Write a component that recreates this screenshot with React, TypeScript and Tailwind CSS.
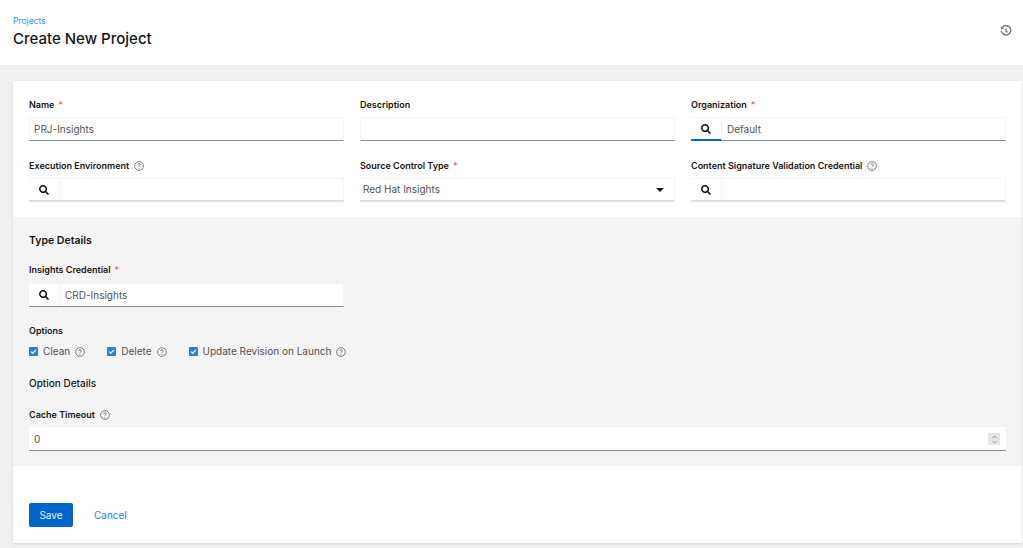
import { FaSearch } from "react-icons/fa";

const font = "font-['Inter','Liberation_Sans',sans-serif]";

const HelpIcon = ({ className = "" }: { className?: string }) => (
  <svg viewBox="0 0 16 16" className={`w-[10px] h-[10px] text-[#6a6e73] ${className}`} fill="none" stroke="currentColor">
    <circle cx="8" cy="8" r="7" strokeWidth="1.4" />
    <path d="M5.9 6.2c0-1.2 1-1.9 2.1-1.9s2.1.7 2.1 1.8c0 1.6-2.1 1.6-2.1 3.1" strokeWidth="1.4" />
    <circle cx="8" cy="11.6" r="0.9" fill="currentColor" stroke="none" />
  </svg>
);

const Label = ({ text, required, help }: { text: string; required?: boolean; help?: boolean }) => (
  <div className="flex items-center h-[13px] mb-[6px] text-[9px] font-semibold leading-none text-[#151515]">
    <span>{text}</span>
    {required && <span className="ml-[4px] font-normal text-[#e0483a]">*</span>}
    {help && <HelpIcon className="ml-[5px]" />}
  </div>
);

const Lookup = ({ value, focused, empty }: { value?: string; focused?: boolean; empty?: boolean }) => (
  <div className={`flex h-[24px] bg-white border-t border-r border-[#f5f5f5] ${empty ? "border-b-2 border-b-[#dedede]" : "border-b border-b-[#8a8d90]"}`}>
    <div className={`w-[31px] flex items-center justify-center border-r border-[#f0f0f0] ${focused ? "border-b-2 border-b-[#06c] -mb-px" : ""}`}>
      <FaSearch size={10} className="text-[#151515]" />
    </div>
    <div className="pl-[5px] pt-[1px] flex items-center text-[10px] text-[#4f5255]">{value}</div>
  </div>
);

const TextBox = ({ value }: { value?: string }) => (
  <div className="h-[24px] bg-white border border-[#f5f5f5] border-b-[#8a8d90] pl-[4px] pt-[1px] flex items-center text-[10px] text-[#4f5255]">
    {value}
  </div>
);

const Check = ({ text }: { text: string }) => (
  <div className="flex items-center">
    <span className="w-[9px] h-[9px] rounded-[1px] bg-[#2b7fdc] flex items-center justify-center">
      <svg viewBox="0 0 10 10" className="w-[7px] h-[7px]" fill="none" stroke="white" strokeWidth="1.8">
        <path d="M1.5 5.2l2.3 2.3 4.7-4.8" />
      </svg>
    </span>
    <span className="ml-[5px] text-[10px] text-[#4f5255]">{text}</span>
    <HelpIcon className="ml-[5px]" />
  </div>
);

export default function App() {
  return (
    <div className={`${font} w-[1023px] h-[548px] overflow-hidden bg-[#f0f0f0]`}>
      <header className="h-[65px] bg-white pl-[13px] pr-[11px] pt-[16px] flex justify-between">
        <div>
          <div className="text-[8.5px] leading-[11px] text-[#2b9af3]">Projects</div>
          <h1 className="mt-[2px] text-[15px] leading-[20px] font-medium text-[#151515]">Create New Project</h1>
        </div>
        <svg viewBox="0 0 16 16" className="w-[12px] h-[12px] mt-[9px] text-[#6a6e73]" fill="none" stroke="currentColor" strokeWidth="1.7">
          <path d="M3 3.2A6.3 6.3 0 1 1 1.8 8" />
          <path d="M1.2 1.8l.3 3.8 3.8-.3z" fill="currentColor" stroke="none" />
          <path d="M8 4.5v4l2.2 1.2" />
        </svg>
      </header>

      <main className="mt-[16px] ml-[13px] mr-[1px] h-[462px] bg-white shadow-[0_1px_2px_rgba(0,0,0,0.12)]">
        <div className="px-[16px] pt-[17px] grid grid-cols-3 gap-x-[16px] gap-y-[18px]">
          <div><Label text="Name" required /><TextBox value="PRJ-Insights" /></div>
          <div><Label text="Description" /><TextBox /></div>
          <div><Label text="Organization" required /><Lookup value="Default" focused /></div>
          <div><Label text="Execution Environment" help /><Lookup empty /></div>
          <div>
            <Label text="Source Control Type" required />
            <div className="h-[24px] bg-white border-t border-r border-[#f5f5f5] border-b-2 border-b-[#dedede] pl-[3px] pr-[10px] flex items-center justify-between text-[10px] text-[#4f5255]">
              <span>Red Hat Insights</span>
              <span className="w-0 h-0 border-x-[4px] border-x-transparent border-t-[4px] border-t-[#151515]" />
            </div>
          </div>
          <div><Label text="Content Signature Validation Credential" help /><Lookup empty /></div>
        </div>

        <section className="mt-[15px] h-[249px] bg-[#f4f4f4] px-[16px] pt-[17px]">
          <h2 className="text-[10.5px] leading-[14px] font-semibold text-[#151515]">Type Details</h2>
          <div className="mt-[15px] w-[315px]">
            <Label text="Insights Credential" required />
            <div className="pt-[1px]">
              <Lookup value="CRD-Insights" />
            </div>
          </div>
          <div className="mt-[17px] text-[9px] leading-[13px] font-semibold text-[#151515]">Options</div>
          <div className="mt-[7px] flex gap-x-[22px]">
            <Check text="Clean" />
            <Check text="Delete" />
            <Check text="Update Revision on Launch" />
          </div>
          <h3 className="mt-[17px] text-[10px] leading-[14px] font-medium text-[#151515]">Option Details</h3>
          <div className="mt-[18px]">
            <Label text="Cache Timeout" help />
            <div className="h-[24px] mt-[1px] bg-white border-b border-[#8a8d90] pl-[5px] pr-[6px] pt-[1px] flex items-center justify-between text-[10px] text-[#4f5255]">
              <span>0</span>
              <span className="w-[12px] h-[12px] bg-[#e6e6ea] flex flex-col items-center justify-center">
                <svg viewBox="0 0 8 10" className="w-[7px] h-[9px]" fill="none" stroke="#8a8d90" strokeWidth="1">
                  <path d="M1.5 3.5L4 1l2.5 2.5M1.5 6.5L4 9l2.5-2.5" />
                </svg>
              </span>
            </div>
          </div>
        </section>

        <div className="pl-[16px] pt-[37px] flex items-center">
          <button className="w-[44px] h-[24px] pt-[1px] rounded-[2px] bg-[#06c] text-[#e8f1fb] text-[10px]">Save</button>
          <a className="ml-[21px] pt-[1px] text-[10px] text-[#2b7fdc]">Cancel</a>
        </div>
      </main>
    </div>
  );
}
